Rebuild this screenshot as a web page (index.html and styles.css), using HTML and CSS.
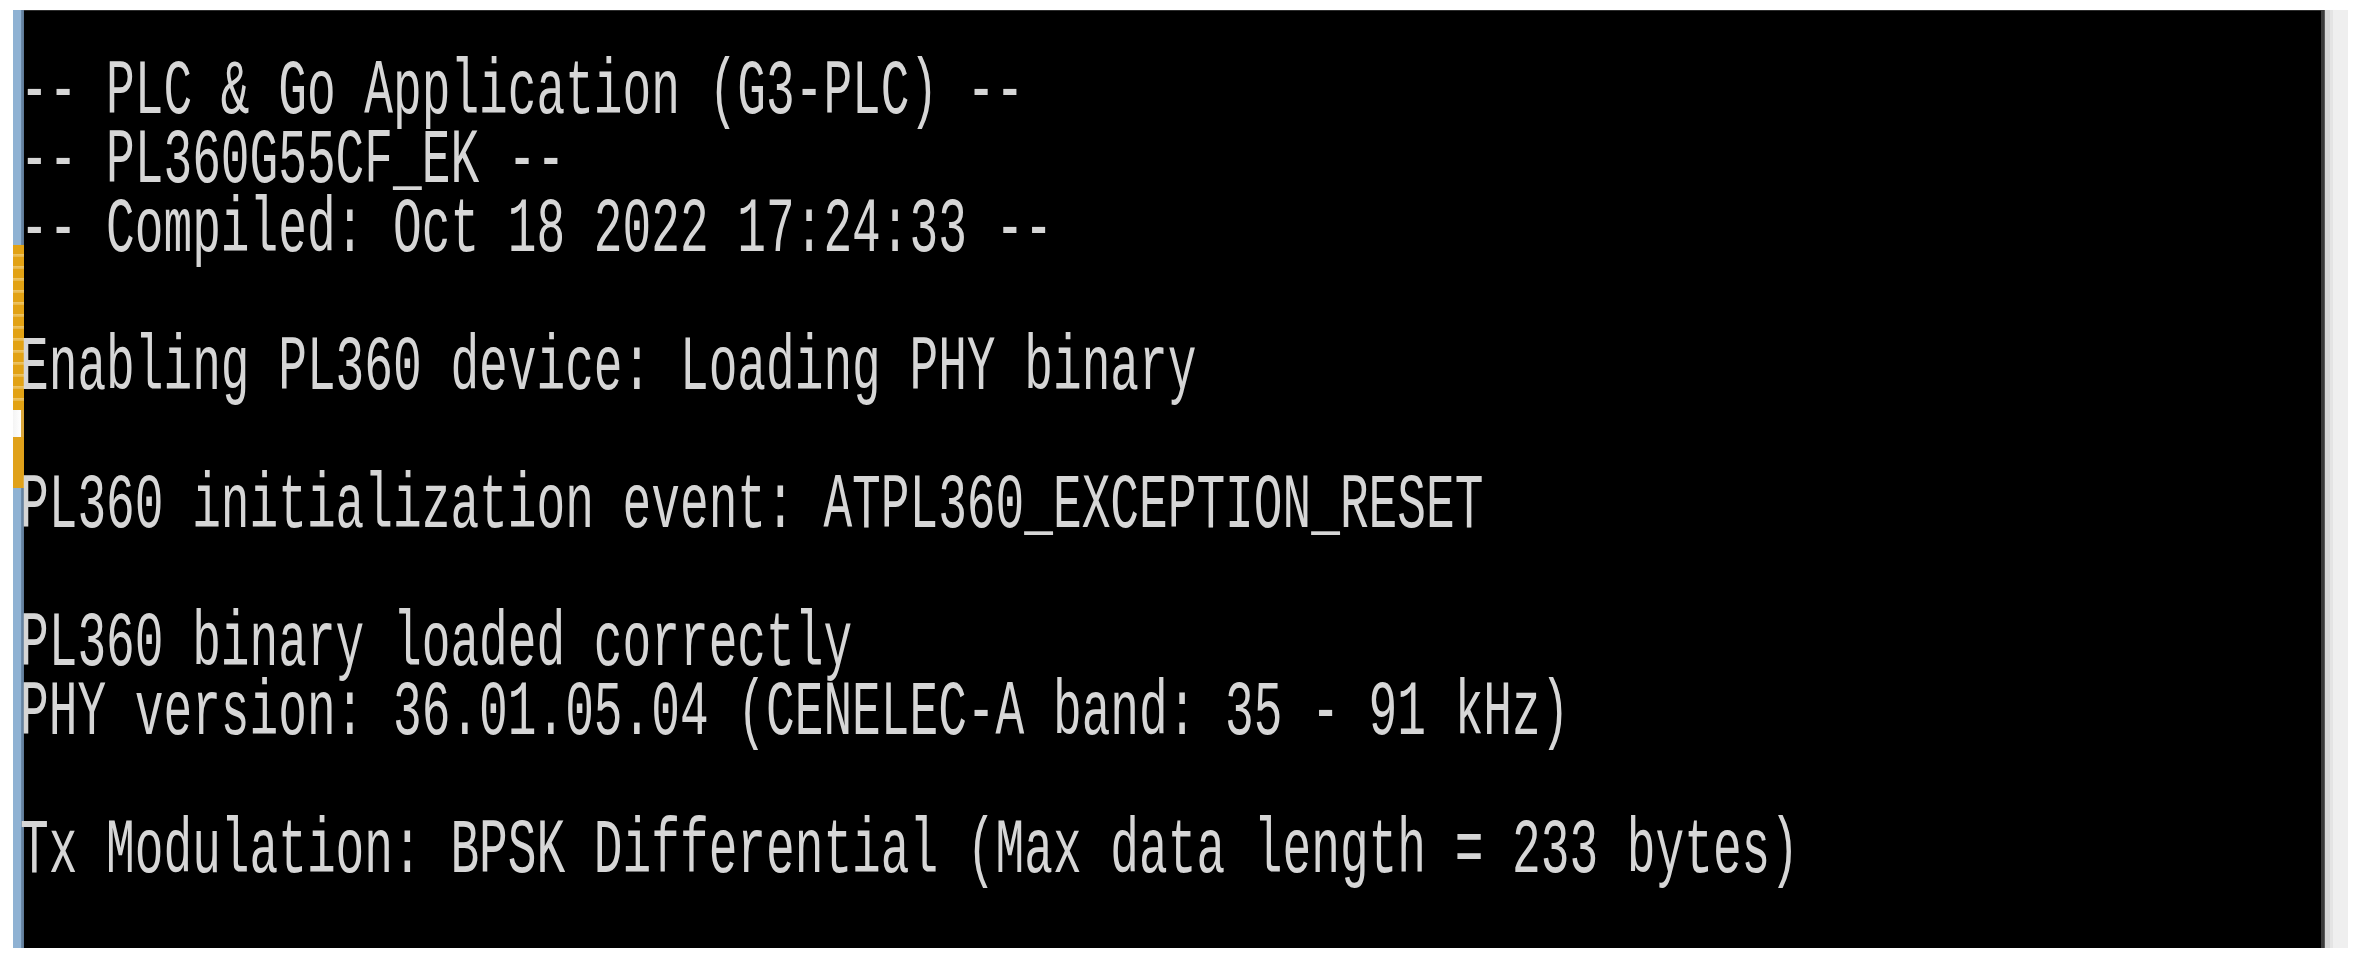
FILE: index.html
```html
<!DOCTYPE html>
<html lang="en">
<head>
<meta charset="utf-8">
<title>PLC &amp; Go Console</title>
<link rel="stylesheet" href="styles.css">
</head>
<body>
<div class="screen">
  <div class="strip">
    <div class="seg seg-blue-top"></div>
    <div class="seg seg-orange"></div>
    <div class="seg seg-gap"></div>
    <div class="seg seg-orange-low"></div>
    <div class="seg seg-blue-bottom"></div>
  </div>
  <div class="terminal">
<pre class="console">-- PLC &amp; Go Application (G3-PLC) --
-- PL360G55CF_EK --
-- Compiled: Oct 18 2022 17:24:33 --

Enabling PL360 device: Loading PHY binary

PL360 initialization event: ATPL360_EXCEPTION_RESET

PL360 binary loaded correctly
PHY version: 36.01.05.04 (CENELEC-A band: 35 - 91 kHz)

Tx Modulation: BPSK Differential (Max data length = 233 bytes)</pre>
  </div>
  <div class="sidebar"></div>
</div>
</body>
</html>
```

FILE: styles.css
```css
html, body {
  margin: 0;
  padding: 0;
  background: #ffffff;
}

.screen {
  display: flex;
  margin: 10px 11px 0 13px;
  height: 938px;
}

.strip {
  width: 11px;
  flex: none;
  display: flex;
  flex-direction: column;
}

.seg { flex: none; }

.seg-blue-top {
  height: 235px;
  background: linear-gradient(to right, #8fb2d3 0, #8fb2d3 8px, #6d8cab 8px, #5d7894 11px);
}

.seg-orange {
  height: 165px;
  background: repeating-linear-gradient(to bottom, #e2a214 0, #e2a214 9px, #edc66a 9px, #e8b440 12px);
}

.seg-gap {
  height: 27px;
  background: linear-gradient(to right, #f4f4f4 0, #ffffff 8px, #d9a63a 8px, #d9a63a 11px);
}

.seg-orange-low {
  height: 51px;
  background: #e0a11a;
}

.seg-blue-bottom {
  flex: 1;
  background: linear-gradient(to right, #8fb2d3 0, #8fb2d3 8px, #6d8cab 8px, #5d7894 11px);
}

.terminal {
  flex: 1;
  min-width: 0;
  background: #000000;
  border-top: 1px solid #2e2e2e;
  padding-top: 47px;
}

.console {
  margin: 0 0 0 -4px;
  font-family: "Liberation Mono", "DejaVu Sans Mono", monospace;
  font-size: 78px;
  line-height: 69px;
  color: #d6d6d6;
  white-space: pre;
  transform: scaleX(0.613);
  transform-origin: 0 0;
  filter: blur(0.5px);
}

.sidebar {
  width: 27px;
  flex: none;
  background: linear-gradient(to right,
    #3a3a3a 0, #3a3a3a 3px,
    #5a5a5a 3px, #5a5a5a 4px,
    #d6d6d6 4px, #d6d6d6 9px,
    #e4e4e4 9px, #e4e4e4 12px,
    #efefef 12px, #efefef 27px);
}
```
